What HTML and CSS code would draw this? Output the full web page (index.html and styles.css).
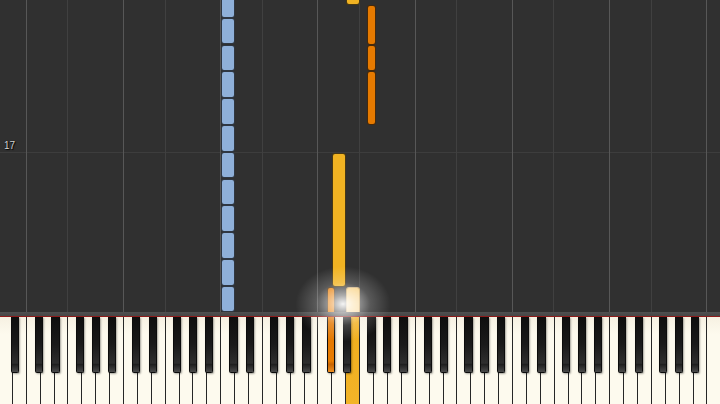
FILE: index.html
```html
<!DOCTYPE html>
<html lang="en">
<head>
    <meta charset="UTF-8">
    <meta name="viewport" content="width=device-width, initial-scale=1.0">
    <title>Piano Roll</title>
    <link rel="stylesheet" href="styles.css">
</head>
<body>
    <div class="stage">
        <div class="roll" id="roll">
            <div class="measure">
                <span class="measure-num">17</span>
            </div>
        </div>
        <div class="rail"></div>
        <div class="keyboard" id="keyboard"></div>
        <div class="glow"></div>
    </div>

    <script>
        // 88 keys -> 52 white keys across the stage
        const KEY_W = 722 / 52;
        const BLACK_W = 8.3;
        const names = ['A', 'B', 'C', 'D', 'E', 'F', 'G'];
        // how far each black key sits from the line between its white keys
        const blackShift = { A: 2.4, C: -1, D: 1.5, F: -2, G: 0 };

        const roll = document.getElementById('roll');
        const keyboard = document.getElementById('keyboard');

        function blackCenter(i) {
            return KEY_W * (i + 1) + blackShift[names[i % 7]] - 0.5;
        }

        // grid lines on every C and F
        for (let i = 1; i < 52; i++) {
            const n = names[i % 7];
            if (n !== 'C' && n !== 'F') continue;
            const line = document.createElement('div');
            line.className = 'grid-line ' + (n === 'C' ? 'grid-c' : 'grid-f');
            line.style.left = (KEY_W * i - 1) + 'px';
            roll.appendChild(line);
        }

        // white keys
        for (let i = 0; i < 52; i++) {
            const key = document.createElement('div');
            key.className = 'white-key';
            if (i === 25) key.classList.add('lit-yellow');
            keyboard.appendChild(key);
        }

        // black keys
        for (let i = 0; i < 51; i++) {
            const n = names[i % 7];
            if (!(n in blackShift)) continue;
            const key = document.createElement('div');
            key.className = 'black-key';
            if (i === 23) key.classList.add('lit-orange');
            key.style.left = (blackCenter(i) - BLACK_W / 2) + 'px';
            keyboard.appendChild(key);
        }

        // notes: [white index or black-after index, isBlack, top, bottom, colour]
        const notes = [
            [25, false, -20, 4.5, 'yellow'],
            [26, true, 4.5, 44.5, 'orange'],
            [26, true, 44.5, 71.3, 'orange'],
            [26, true, 71.3, 125, 'orange'],
            [24, false, 152.5, 286.7, 'yellow'],
            [23, true, 286.7, 330, 'orange'],
            [25, false, 286.7, 330, 'pale']
        ];
        for (let n = 0; n < 12; n++) {
            const top = -9.1 + 26.8 * n;
            notes.push([16, false, top, top + 26.8, 'blue']);
        }

        notes.forEach(([idx, black, top, bottom, colour]) => {
            const note = document.createElement('div');
            note.className = 'note note-' + colour;
            const left = black ? blackCenter(idx) - BLACK_W / 2 : KEY_W * idx;
            const width = black ? BLACK_W : KEY_W;
            note.style.left = left + 'px';
            note.style.width = width + 'px';
            note.style.top = top + 'px';
            note.style.height = (bottom - top) + 'px';
            roll.appendChild(note);
        });
    </script>
</body>
</html>
```

FILE: styles.css
```css
body {
    margin: 0;
    padding: 0;
    height: 404px;
    overflow: hidden;
    background-color: #303030;
    font-family: "Liberation Sans", Arial, sans-serif;
}

.stage {
    position: relative;
    width: 722px;
    margin-left: -1px;
    display: flex;
    flex-direction: column;
}

.roll {
    position: relative;
    height: 312px;
    overflow: hidden;
    background-color: #303030;
}

.grid-line {
    position: absolute;
    top: 0;
    bottom: 0;
    width: 1px;
}

.grid-c {
    background-color: #575757;
}

.grid-f {
    background-color: #404040;
}

.measure {
    position: absolute;
    left: 0;
    right: 0;
    top: 152px;
    height: 1px;
    background-color: #3d3d3d;
}

.measure-num {
    position: absolute;
    left: 5px;
    bottom: 2px;
    font-size: 10px;
    color: #d4d4d4;
    text-shadow: 0 0 1px #000, 1px 1px 1px #000;
}

.note {
    position: absolute;
    box-sizing: border-box;
    border: 1px solid rgba(15, 15, 15, 0.75);
    border-radius: 3px;
}

.note-blue {
    background-color: #8fb0d9;
}

.note-orange {
    background-color: #e67a00;
}

.note-yellow {
    background-color: #f1b322;
}

.note-pale {
    background: linear-gradient(#f8cf7c, #fde6b8);
    border-color: rgba(120, 80, 20, 0.4);
}

.rail {
    height: 4px;
    background: linear-gradient(#505050, #464646);
    border-bottom: 1px solid #8e1c1c;
}

.keyboard {
    position: relative;
    display: flex;
    height: 87px;
}

.white-key {
    flex: 1;
    background: linear-gradient(#f6f1e2, #fdfaee 20%, #fdfaee);
    border-right: 1px solid #262626;
}

.white-key.lit-yellow {
    background: linear-gradient(#f0ad1c, #f2b428);
}

.black-key {
    position: absolute;
    top: 0;
    width: 8.3px;
    height: 56px;
    box-sizing: border-box;
    border: 1px solid #0c0c0c;
    border-top: none;
    border-radius: 0 0 2px 2px;
    background: linear-gradient(#0e0e0e 0%, #1a1a1a 50%, #2e2e2e 84%, #1e1e1e 86%, #4a4a4a 100%);
    box-shadow: 1px 1px 2px rgba(0, 0, 0, 0.35);
}

.black-key.lit-orange {
    background: linear-gradient(#e07400 0%, #e87c00 80%, #c86400 86%, #f09020 100%);
}

.glow {
    position: absolute;
    left: 296px;
    top: 266px;
    width: 96px;
    height: 76px;
    pointer-events: none;
    background: radial-gradient(ellipse at center, rgba(255, 255, 255, 0.95) 0%, rgba(255, 255, 255, 0.6) 16%, rgba(255, 255, 255, 0.2) 40%, rgba(255, 255, 255, 0) 70%);
}
```
